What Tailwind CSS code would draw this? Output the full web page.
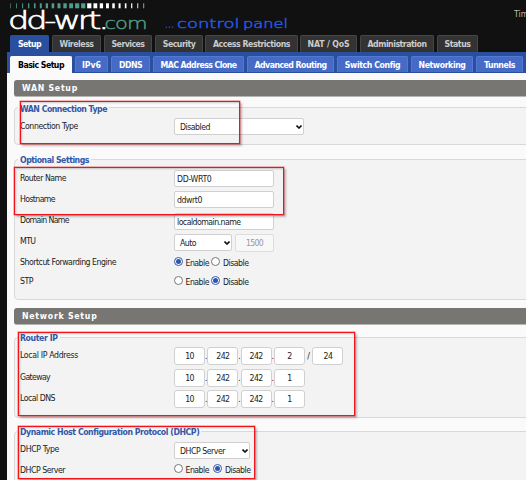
<!DOCTYPE html>
<html lang="en">
<head>
<meta charset="utf-8">
<title>DD-WRT - Basic Setup</title>
<script src="https://cdn.jsdelivr.net/npm/@tailwindcss/browser@4"></script>
</head>
<body class="w-[526px] h-[480px] overflow-hidden bg-[#111] font-['DejaVu_Sans_Condensed','DejaVu_Sans',sans-serif] [font-stretch:condensed] text-[8.7px] leading-[12px] text-[#222]">
<div class="relative w-[526px] h-[480px] overflow-hidden pl-[7px]">
  <header class="h-[35px] flex justify-between">
    <svg class="block shrink-0" width="300" height="35" viewBox="7 0 300 35">
      <g id="ticks"></g>
      <text x="8" y="28.7" font-family="DejaVu Sans Light, DejaVu Sans" font-weight="200" font-size="24" fill="#fff" stroke="#fff" stroke-width=".7" letter-spacing="-2.200" textLength="98" lengthAdjust="spacingAndGlyphs">dd-wrt.</text>
      <text x="104.500" y="28.7" font-family="DejaVu Sans Light, DejaVu Sans" font-weight="200" font-size="16" fill="#4f9c88" stroke="#4f9c88" stroke-width=".4" letter-spacing="-.8" textLength="42" lengthAdjust="spacingAndGlyphs">com</text>
      <text x="165" y="28.3" font-family="DejaVu Sans" font-size="13" fill="#2457e0" textLength="9" lengthAdjust="spacingAndGlyphs">...</text>
      <text x="177" y="28.3" font-family="DejaVu Sans Light, DejaVu Sans" font-weight="200" font-size="13" fill="#2457e0" stroke="#2457e0" stroke-width=".5" textLength="62.500" lengthAdjust="spacingAndGlyphs">control</text>
      <text x="243" y="28.3" font-family="DejaVu Sans Light, DejaVu Sans" font-weight="200" font-size="13" fill="#2457e0" stroke="#2457e0" stroke-width=".5" textLength="45" lengthAdjust="spacingAndGlyphs">panel</text>
    </svg>
    <span class="mt-[8px] w-[12px] text-[#bbb] whitespace-nowrap">Time: </span>
  </header>
  <nav class="h-[17px] pl-[3px] flex text-[8.7px] leading-[18px] font-bold text-[#ccc] text-center whitespace-nowrap *:rounded-t-[2px] *:border *:border-b-0 *:border-[#464646] *:bg-[#333] *:flex *:justify-center *:shrink-0 *:leading-[17px]">
    <a class="w-[39px] mr-[3px] bg-[#2b4f9f]! border-[#2b4f9f]! text-white"><span data-w="23">Setup</span></a>
    <a class="w-[49px] mr-[3px]"><span data-w="34">Wireless</span></a>
    <a class="w-[48px] mr-[3px]"><span data-w="33">Services</span></a>
    <a class="w-[48px] mr-[2px]"><span data-w="32.5">Security</span></a>
    <a class="w-[93px] mr-[2px]"><span data-w="77">Access Restrictions</span></a>
    <a class="w-[57px] mr-[3px]"><span data-w="42">NAT / QoS</span></a>
    <a class="w-[74px] mr-[3px]"><span data-w="59">Administration</span></a>
    <a class="w-[41px]"><span data-w="26">Status</span></a>
  </nav>
  <nav class="h-[21px] pt-[4px] pl-[3px] flex bg-[#2b4f9f] text-[8.7px] font-bold text-white whitespace-nowrap *:rounded-t-[2px] *:border *:border-b-0 *:border-[#5479d2] *:bg-[#466bc6] *:flex *:justify-center *:shrink-0 *:leading-[16px] *:h-[16px]">
    <a class="w-[62px] mr-[3px] h-[17px]! bg-[#fafafa]! border-[#fafafa]! text-black"><span data-w="46">Basic Setup</span></a>
    <a class="w-[33px] mr-[3px]"><span data-w="19">IPv6</span></a>
    <a class="w-[39px] mr-[3px]"><span data-w="23">DDNS</span></a>
    <a class="w-[91px] mr-[3px]"><span data-w="76">MAC Address Clone</span></a>
    <a class="w-[87px] mr-[3px]"><span data-w="72">Advanced Routing</span></a>
    <a class="w-[71px] mr-[3px]"><span data-w="55">Switch Config</span></a>
    <a class="w-[62px] mr-[3px]"><span data-w="47">Networking</span></a>
    <a class="w-[47px]"><span data-w="31">Tunnels</span></a>
  </nav>
  <main class="h-[407px] bg-[#fafafa] pl-[7px] pt-[7px] overflow-hidden">
    <h2 class="h-[17px] pl-[8px] leading-[17px] bg-[#777673] border-b border-[#b5b5b3] rounded-l-[3px] text-white font-bold whitespace-nowrap"><span data-w="56">WAN Setup</span></h2>

    <section class="mt-[10px] h-[38px] w-[530px] border border-[#d8d8d8] rounded-[4px] bg-[#f3f3f3] pl-[5px]">
      <h3 class="relative -top-[5px] -ml-[2px] h-[12px] w-fit px-[2px] bg-linear-to-b from-[#fafafa] from-40% to-[#f3f3f3] to-40% font-bold text-[#3357a8] whitespace-nowrap"><span data-w="87">WAN Connection Type</span></h3>
      <div class="-mt-[2px] h-[17px] flex items-center">
        <span class="w-[154px] -mt-[2px]"><span data-w="58">Connection Type</span></span>
        <div class="w-[130px] h-[17px] border border-[#d0d0d0] rounded-[2px] bg-white flex items-center justify-between pl-[5px] pr-[1.5px]"><span data-w="30">Disabled</span><svg width="6" height="4" viewBox="0 0 6 4" fill="none" stroke="#111" stroke-width="1.6"><path d="M.5.5 3 3 5.500.5"/></svg></div>
      </div>
    </section>

    <section class="mt-[14px] h-[141px] w-[530px] border border-[#d8d8d8] rounded-[4px] bg-[#f3f3f3] pl-[5px]">
      <h3 class="relative -top-[6px] -ml-[2px] h-[12px] w-fit px-[2px] bg-linear-to-b from-[#fafafa] from-50% to-[#f3f3f3] to-50% font-bold text-[#3357a8] whitespace-nowrap"><span data-w="69">Optional Settings</span></h3>
      <div class="-mt-[2px] h-[17px] flex items-center">
        <span class="w-[154px] -mt-[2px]"><span data-w="46">Router Name</span></span>
        <div class="w-[100px] h-[17px] border border-[#d0d0d0] rounded-[2px] bg-white pl-[2px] leading-[16px]"><span data-w="34.5">DD-WRT0</span></div>
      </div>
      <div class="mt-[4px] h-[17px] flex items-center">
        <span class="w-[154px] -mt-[2px]"><span data-w="35">Hostname</span></span>
        <div class="w-[100px] h-[17px] border border-[#d0d0d0] rounded-[2px] bg-white pl-[2px] leading-[16px]"><span data-w="25">ddwrt0</span></div>
      </div>
      <div class="mt-[5px] h-[17px] flex items-center">
        <span class="w-[154px] -mt-[3px]"><span data-w="49">Domain Name</span></span>
        <div class="w-[100px] h-[17px] border border-[#d0d0d0] rounded-[2px] bg-white pl-[2px] leading-[16px]"><span data-w="63.500">localdomain.name</span></div>
      </div>
      <div class="mt-[4px] h-[17px] flex items-center">
        <span class="w-[154px] -mt-[3px]"><span data-w="15.500">MTU</span></span>
        <div class="w-[58px] h-[17px] border border-[#d0d0d0] rounded-[2px] bg-white flex items-center justify-between pl-[5px] pr-[1.5px]"><span data-w="16">Auto</span><svg width="6" height="4" viewBox="0 0 6 4" fill="none" stroke="#111" stroke-width="1.6"><path d="M.5.5 3 3 5.500.5"/></svg></div>
        <div class="ml-[3px] w-[39px] h-[18px] border border-[#ddd] rounded-[2px] bg-[#f8f8f8] text-[#999] flex justify-center items-center"><span data-w="17">1500</span></div>
      </div>
      <div class="mt-[3px] h-[17px] flex items-center">
        <span class="w-[154px] -mt-[1px]"><span data-w="96">Shortcut Forwarding Engine</span></span>
        <i class="size-[9px] -mt-[3px] rounded-full border border-[#2f56a6] bg-white p-[1px] flex"><b class="flex-1 rounded-full bg-[#2f56a6]"></b></i>
        <span class="ml-[2.500px] w-[25.500px]"><span data-w="23.500">Enable</span></span>
        <i class="size-[9px] -mt-[3px] rounded-full border border-[#777] bg-white"></i>
        <span class="ml-[3px]"><span data-w="25.500">Disable</span></span>
      </div>
      <div class="mt-[2px] h-[17px] flex items-center">
        <span class="w-[154px] -mt-[1px]"><span data-w="13">STP</span></span>
        <i class="size-[9px] -mt-[3px] rounded-full border border-[#777] bg-white"></i>
        <span class="ml-[2.500px] w-[25.500px]"><span data-w="23.500">Enable</span></span>
        <i class="size-[9px] -mt-[3px] rounded-full border border-[#2f56a6] bg-white p-[1px] flex"><b class="flex-1 rounded-full bg-[#2f56a6]"></b></i>
        <span class="ml-[3px]"><span data-w="25.500">Disable</span></span>
      </div>
    </section>

    <h2 class="mt-[8px] h-[17px] pl-[8px] leading-[17px] bg-[#777673] border-b border-[#b5b5b3] rounded-l-[3px] text-white font-bold whitespace-nowrap"><span data-w="75.500">Network Setup</span></h2>

    <section class="mt-[12px] h-[81px] w-[530px] border border-[#d8d8d8] rounded-[4px] bg-[#f3f3f3] pl-[5px]">
      <h3 class="relative -top-[6px] -ml-[2px] h-[12px] w-fit px-[2px] bg-linear-to-b from-[#fafafa] from-50% to-[#f3f3f3] to-50% font-bold text-[#3357a8] whitespace-nowrap"><span data-w="37.500">Router IP</span></h3>
      <div class="-mt-[3px] h-[18px] flex items-center whitespace-nowrap">
        <span class="w-[154px] -mt-[2px]"><span data-w="58">Local IP Address</span></span>
        <div class="w-[31px] h-[18px] border border-[#d0d0d0] rounded-[3px] bg-white flex justify-center items-center"><span data-w="8.500">10</span></div><span class="w-[2.300px] text-center">.</span>
        <div class="w-[31px] h-[18px] border border-[#d0d0d0] rounded-[3px] bg-white flex justify-center items-center"><span data-w="13">242</span></div><span class="w-[2.300px] text-center">.</span>
        <div class="w-[31px] h-[18px] border border-[#d0d0d0] rounded-[3px] bg-white flex justify-center items-center"><span data-w="13">242</span></div><span class="w-[2.300px] text-center">.</span>
        <div class="w-[31px] h-[18px] border border-[#d0d0d0] rounded-[3px] bg-white flex justify-center items-center"><span data-w="4.500">2</span></div><span class="w-[7.500px] text-center">/</span>
        <div class="w-[31px] h-[18px] border border-[#d0d0d0] rounded-[3px] bg-white flex justify-center items-center"><span data-w="9">24</span></div>
      </div>
      <div class="mt-[4px] h-[18px] flex items-center whitespace-nowrap">
        <span class="w-[154px] -mt-[2px]"><span data-w="30">Gateway</span></span>
        <div class="w-[31px] h-[18px] border border-[#d0d0d0] rounded-[3px] bg-white flex justify-center items-center"><span data-w="8.500">10</span></div><span class="w-[2.300px] text-center">.</span>
        <div class="w-[31px] h-[18px] border border-[#d0d0d0] rounded-[3px] bg-white flex justify-center items-center"><span data-w="13">242</span></div><span class="w-[2.300px] text-center">.</span>
        <div class="w-[31px] h-[18px] border border-[#d0d0d0] rounded-[3px] bg-white flex justify-center items-center"><span data-w="13">242</span></div><span class="w-[2.300px] text-center">.</span>
        <div class="w-[31px] h-[18px] border border-[#d0d0d0] rounded-[3px] bg-white flex justify-center items-center"><span data-w="4.500">1</span></div>
      </div>
      <div class="mt-[3px] h-[18px] flex items-center whitespace-nowrap">
        <span class="w-[154px] -mt-[2px]"><span data-w="35">Local DNS</span></span>
        <div class="w-[31px] h-[18px] border border-[#d0d0d0] rounded-[3px] bg-white flex justify-center items-center"><span data-w="8.500">10</span></div><span class="w-[2.300px] text-center">.</span>
        <div class="w-[31px] h-[18px] border border-[#d0d0d0] rounded-[3px] bg-white flex justify-center items-center"><span data-w="13">242</span></div><span class="w-[2.300px] text-center">.</span>
        <div class="w-[31px] h-[18px] border border-[#d0d0d0] rounded-[3px] bg-white flex justify-center items-center"><span data-w="13">242</span></div><span class="w-[2.300px] text-center">.</span>
        <div class="w-[31px] h-[18px] border border-[#d0d0d0] rounded-[3px] bg-white flex justify-center items-center"><span data-w="4.500">1</span></div>
      </div>
    </section>

    <section class="mt-[13px] h-[80px] w-[530px] border border-[#d8d8d8] rounded-[4px] bg-[#f3f3f3] pl-[5px]">
      <h3 class="relative -top-[6px] -ml-[2px] h-[12px] w-fit px-[2px] bg-linear-to-b from-[#fafafa] from-50% to-[#f3f3f3] to-50% font-bold text-[#3357a8] whitespace-nowrap"><span data-w="179">Dynamic Host Configuration Protocol (DHCP)</span></h3>
      <div class="-mt-[2px] h-[17px] flex items-center">
        <span class="w-[154px] -mt-[3px]"><span data-w="39">DHCP Type</span></span>
        <div class="w-[76px] h-[17px] border border-[#d0d0d0] rounded-[2px] bg-white flex items-center justify-between pl-[5px] pr-[1.5px]"><span data-w="45">DHCP Server</span><svg width="6" height="4" viewBox="0 0 6 4" fill="none" stroke="#111" stroke-width="1.6"><path d="M.5.5 3 3 5.500.5"/></svg></div>
      </div>
      <div class="mt-[2px] h-[17px] flex items-center">
        <span class="w-[154px]"><span data-w="45">DHCP Server</span></span>
        <i class="size-[9px] -mt-[3px] rounded-full border border-[#777] bg-white"></i>
        <span class="ml-[2.500px] w-[27.500px]"><span data-w="23.500">Enable</span></span>
        <i class="size-[9px] -mt-[3px] rounded-full border border-[#2f56a6] bg-white p-[1px] flex"><b class="flex-1 rounded-full bg-[#2f56a6]"></b></i>
        <span class="ml-[3px]"><span data-w="25.500">Disable</span></span>
      </div>
    </section>
  </main>

  <div class="absolute left-[20px] top-[101px] w-[220px] h-[43px] border border-[#f0151a] shadow-[0_0_0_.5px_rgba(240,21,26,.6),2px_2px_2px_rgba(0,0,0,.25),inset_1px_1px_2px_rgba(0,0,0,.2)]"></div>
  <div class="absolute left-[14px] top-[167px] w-[270px] h-[48px] border border-[#f0151a] shadow-[0_0_0_.5px_rgba(240,21,26,.6),2px_2px_2px_rgba(0,0,0,.25),inset_1px_1px_2px_rgba(0,0,0,.2)]"></div>
  <div class="absolute left-[18px] top-[332px] w-[337px] h-[84px] border border-[#f0151a] shadow-[0_0_0_.5px_rgba(240,21,26,.6),2px_2px_2px_rgba(0,0,0,.25),inset_1px_1px_2px_rgba(0,0,0,.2)]"></div>
  <div class="absolute left-[18px] top-[426px] w-[237px] h-[53px] border border-[#f0151a] shadow-[0_0_0_.5px_rgba(240,21,26,.6),2px_2px_2px_rgba(0,0,0,.25),inset_1px_1px_2px_rgba(0,0,0,.2)]"></div>
</div>
<script>
// Header tick strip: bars widen towards the middle, green on the left half, white on the right.
const widths = [0.6,0.8,1,1.300,1.600,2,2.300,2.600,3,3.400,3.800,4.200,4.200,4.200,3.800,3.300,2.900,2.500,2,1.600,1.200,.9,0.6];
document.getElementById('ticks').innerHTML = widths.map((w, i) => {
  const c = 10.500 + i * 6.060;
  return `<rect x="${c - w / 2}" y="3.300" width="${w}" height="5" fill="${i < 13 ? '#4f9c88' : '#fff'}"/>`;
}).join('');
// Track each label to its set width once styles are in.
function track() {
  document.querySelectorAll('[data-w]').forEach(el => {
    el.style.whiteSpace = 'nowrap';
    el.style.letterSpacing = '0px';
    const r = document.createRange();
    r.selectNodeContents(el);
    const w = r.getBoundingClientRect().width;
    el.style.letterSpacing = (el.dataset.w - w) / el.textContent.length + 'px';
  });
}
window.addEventListener('load', () => { track(); document.fonts.ready.then(track); });
</script>
</body>
</html>
